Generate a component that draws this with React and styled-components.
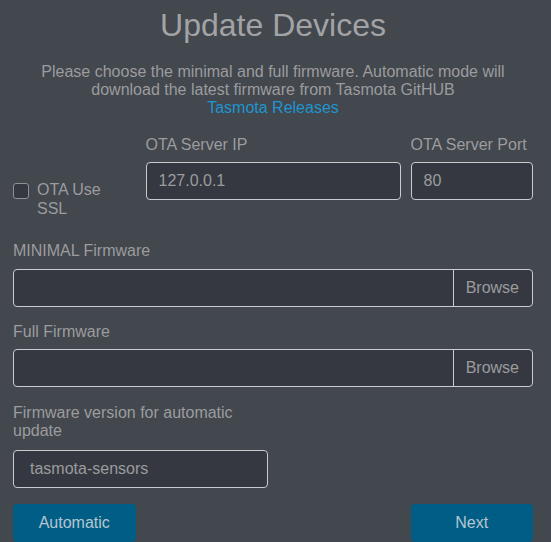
import React from "react";
import styled, { createGlobalStyle } from "styled-components";

const Global = createGlobalStyle`
  html, body { margin: 0; padding: 0; background: #43474e; }
  body { font-family: "Liberation Sans", Arial, sans-serif; font-size: 16px; color: #9b9c9e; }
  * { box-sizing: border-box; }
`;

const Page = styled.div`
  width: 551px;
  height: 542px;
  overflow: hidden;
  padding: 6.5px 18px 0 13px;
  background: #43474e;
`;

const Title = styled.h1`
  margin: 0;
  font-size: 32px;
  font-weight: 400;
  line-height: normal;
  text-align: center;
  color: #a2a3a5;
`;

const Intro = styled.p`
  margin: 19px 0 0;
  text-align: center;
  line-height: 18.4px;
  color: #9b9c9e;
`;

const Link = styled.a`
  display: block;
  color: #1f95d0;
  text-decoration: none;
`;

const Row = styled.div`
  display: flex;
  align-items: flex-start;
  margin: ${(p) => p.$mt || 0}px -5px ${(p) => p.$mb || 0}px;
  justify-content: ${(p) => (p.$spread ? "space-between" : "flex-start")};
`;

const Col = styled.div`
  flex: 0 0 ${(p) => p.$span * (100 / 12)}%;
  max-width: ${(p) => p.$span * (100 / 12)}%;
  padding: ${(p) => p.$pt || 0}px 5px 0;
`;

const Group = styled.div`
  margin-bottom: ${(p) => (p.$mb === undefined ? 16 : p.$mb)}px;
`;

const Label = styled.label`
  display: block;
  margin-bottom: ${(p) => p.$mb || 8}px;
  line-height: 18.4px;
  color: #9b9c9e;
`;

const TextInput = styled.input`
  display: block;
  width: 100%;
  height: 38px;
  padding: 0 12px 0 ${(p) => p.$pl || 12}px;
  border: 1px solid #c9cbce;
  border-radius: 4px;
  background: #353840;
  color: #9b9c9e;
  font: inherit;
  outline: none;
`;

const CheckLabel = styled.label`
  display: flex;
  align-items: flex-start;
  gap: 8px;
  line-height: 18.4px;
  color: #9b9c9e;
`;

const CheckText = styled.span`
  max-width: 80px;
`;

const Check = styled.input`
  appearance: none;
  flex: 0 0 16px;
  width: 16px;
  height: 16px;
  margin: 2px 0 0;
  border: 1px solid #8e9095;
  border-radius: 3px;
  background: #353840;
`;

const FileBox = styled.div`
  display: flex;
  height: 38px;
  border: 1px solid #c9cbce;
  border-radius: 4px;
  background: #353840;
  overflow: hidden;
`;

const FileField = styled.div`
  flex: 1;
`;

const BrowseBtn = styled.div`
  display: flex;
  align-items: center;
  padding: 0 13px 0 12px;
  border-left: 1px solid #c9cbce;
  color: #9b9c9e;
`;

const Button = styled.button`
  width: 100%;
  height: 38px;
  border: none;
  border-radius: 4px;
  background: #005e86;
  color: #b7c5ce;
  font: inherit;
  cursor: pointer;
`;

export default function App() {
  return (
    <Page>
      <Global />
      <Title>Update Devices</Title>
      <Intro>
        Please choose the minimal and full firmware. Automatic mode will
        download the latest firmware from Tasmota GitHUB
        <Link href="#">Tasmota Releases</Link>
      </Intro>

      <Row $mt={18} $mb={24}>
        <Col $span={3} $pt={45.7}>
          <CheckLabel>
            <Check type="checkbox" />
            <CheckText>OTA Use SSL</CheckText>
          </CheckLabel>
        </Col>
        <Col $span={6}>
          <Label>OTA Server IP</Label>
          <TextInput defaultValue="127.0.0.1" />
        </Col>
        <Col $span={3}>
          <Label>OTA Server Port</Label>
          <TextInput defaultValue="80" />
        </Col>
      </Row>

      <Group>
        <Label>MINIMAL Firmware</Label>
        <FileBox>
          <FileField />
          <BrowseBtn>Browse</BrowseBtn>
        </FileBox>
      </Group>

      <Group $mb={17}>
        <Label>Full Firmware</Label>
        <FileBox>
          <FileField />
          <BrowseBtn>Browse</BrowseBtn>
        </FileBox>
      </Group>

      <Row>
        <Col $span={6}>
          <Label $mb={9}>Firmware version for automatic update</Label>
          <TextInput $pl={16} defaultValue="tasmota-sensors" />
        </Col>
      </Row>

      <Row $mt={16} $spread>
        <Col $span={3}>
          <Button>Automatic</Button>
        </Col>
        <Col $span={3}>
          <Button>Next</Button>
        </Col>
      </Row>
    </Page>
  );
}
